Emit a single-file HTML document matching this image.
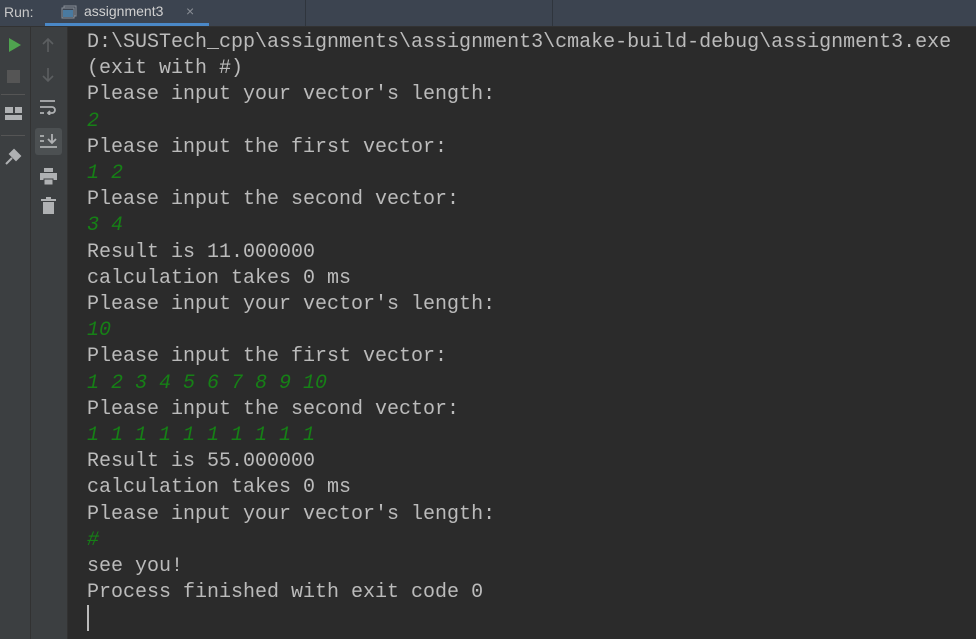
<!DOCTYPE html>
<html><head><meta charset="utf-8"><style>
html,body{margin:0;padding:0;width:976px;height:639px;overflow:hidden;background:#2b2b2b;font-family:"Liberation Sans",sans-serif}
#hdr{position:absolute;left:0;top:0;width:976px;height:26px;background:#3c4450;border-bottom:1px solid #323232}
#hdr .run{position:absolute;left:4px;top:4px;color:#c8c8c8;font-size:14px}
#hdr .tab{position:absolute;left:84px;top:3px;color:#d0d0d0;font-size:14px}
#hdr .ul{position:absolute;left:45px;top:23px;width:164px;height:3px;background:#4a88c7}
#hdr .x{position:absolute;left:186px;top:3px;color:#8a8f96;font-size:14px}
.div{position:absolute;top:0;width:1px;height:26px;background:#2f353d}
#g1{position:absolute;left:0;top:27px;width:30px;height:612px;background:#3c3f41;border-right:1px solid #323232}
#g2{position:absolute;left:31px;top:27px;width:36px;height:612px;background:#3c3f41;border-right:1px solid #323232}
#txt{position:absolute;left:87px;top:30px;font-family:"Liberation Mono",monospace;font-size:20px;line-height:26.2px;color:#bbbbbb;white-space:pre}
.g{color:#168016;font-style:italic}
#cur{position:absolute;left:87px;top:605px;width:2px;height:26px;background:#bbbbbb}
svg{position:absolute}
</style></head><body>
<div id="hdr"><span class="run">Run:</span>
<svg style="left:61px;top:5px" width="16" height="14"><rect x="3" y="1" width="12" height="10" fill="none" stroke="#8a9099"/><rect x="1" y="3" width="12" height="10" fill="#3c4450" stroke="#8a9099"/><rect x="2" y="5" width="10" height="7" fill="#4a7aa0"/></svg>
<span class="tab">assignment3</span><span class="x">×</span><div class="ul"></div>
<div class="div" style="left:305px"></div><div class="div" style="left:552px"></div></div>
<div id="g1">
<svg style="left:7px;top:10px" width="16" height="16"><polygon points="2,1 14,8 2,15" fill="#4fa34f"/></svg>
<svg style="left:7px;top:43px" width="14" height="14"><rect x="0" y="0" width="13" height="13" fill="#555555"/></svg>
<div style="position:absolute;left:1px;top:67px;width:24px;height:1px;background:#555"></div>
<svg style="left:5px;top:80px" width="18" height="14"><rect x="0" y="0" width="8" height="6" fill="#afb1b3"/><rect x="10" y="0" width="7" height="6" fill="#afb1b3"/><rect x="0" y="8" width="17" height="5" fill="#afb1b3"/></svg>
<div style="position:absolute;left:1px;top:108px;width:24px;height:1px;background:#555"></div>
<svg style="left:3px;top:120px" width="20" height="20"><path d="M3 17 L9 11 M8 6 L14 12 M11 3 L17 9 L13 13 L7 7 Z" stroke="#afb1b3" stroke-width="2" fill="#afb1b3"/></svg>
</div>
<div id="g2">
<svg style="left:10px;top:10px" width="14" height="16"><path d="M7 15 V2 M2 7 L7 2 L12 7" stroke="#5c5f61" stroke-width="1.6" fill="none"/></svg>
<svg style="left:10px;top:40px" width="14" height="16"><path d="M7 1 V14 M2 9 L7 14 L12 9" stroke="#5c5f61" stroke-width="1.6" fill="none"/></svg>
<svg style="left:8px;top:72px" width="20" height="16"><path d="M1 2 H16 M1 8 H13 a3 3 0 0 1 0 6 H9 M11 12 L9 14 L11 16 M1 14 H5" stroke="#afb1b3" stroke-width="1.8" fill="none"/></svg>
<div style="position:absolute;left:4px;top:101px;width:27px;height:27px;background:#4c5052;border-radius:3px"></div>
<svg style="left:8px;top:106px" width="20" height="18"><path d="M1 3 H5 M1 8 H5 M1 14 H18 M13 1 V10 M9 6 L13 10 L17 6" stroke="#afb1b3" stroke-width="1.8" fill="none"/></svg>
<svg style="left:8px;top:141px" width="20" height="18"><rect x="5" y="0" width="9" height="4" fill="#afb1b3"/><rect x="1" y="5" width="17" height="7" fill="#afb1b3"/><rect x="5" y="11" width="9" height="6" fill="#afb1b3" stroke="#3c3f41"/></svg>
<svg style="left:10px;top:170px" width="16" height="18"><rect x="0" y="2" width="15" height="2" fill="#afb1b3"/><rect x="5" y="0" width="5" height="2" fill="#afb1b3"/><rect x="2" y="5" width="11" height="12" fill="#afb1b3"/></svg>
</div>
<div id="txt">D:\SUSTech_cpp\assignments\assignment3\cmake-build-debug\assignment3.exe
(exit with #)
Please input your vector's length:
<span class="g">2</span>
Please input the first vector:
<span class="g">1 2</span>
Please input the second vector:
<span class="g">3 4</span>
Result is 11.000000
calculation takes 0 ms
Please input your vector's length:
<span class="g">10</span>
Please input the first vector:
<span class="g">1 2 3 4 5 6 7 8 9 10</span>
Please input the second vector:
<span class="g">1 1 1 1 1 1 1 1 1 1</span>
Result is 55.000000
calculation takes 0 ms
Please input your vector's length:
<span class="g">#</span>
see you!
Process finished with exit code 0</div>
<div id="cur"></div>
</body></html>
